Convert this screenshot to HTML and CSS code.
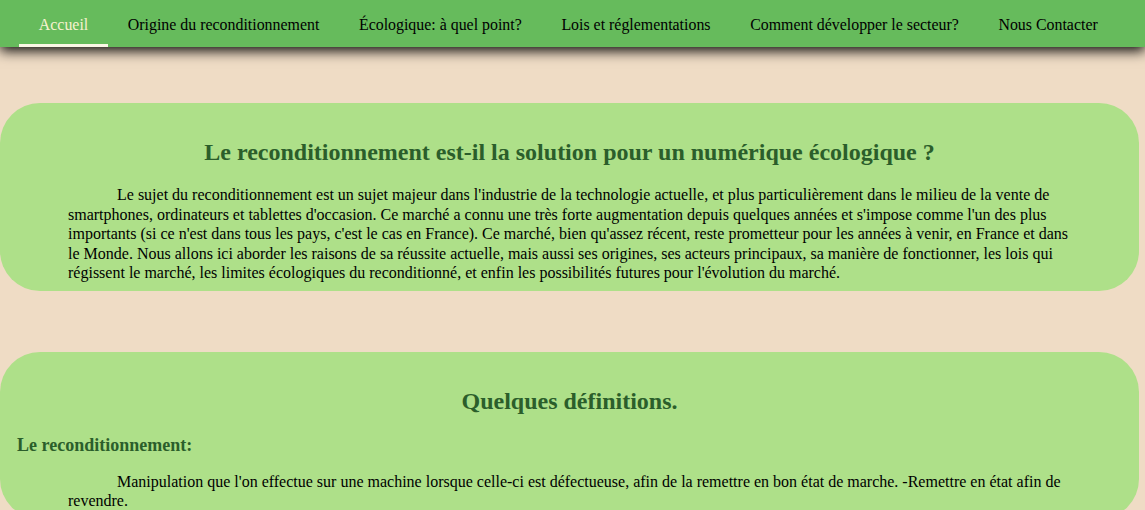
FILE: index.html
```html
<!DOCTYPE html>
<html lang="fr">
<head>
<meta charset="utf-8">
<title>Reconditionnement</title>
<link rel="stylesheet" href="styles.css">
</head>
<body>
<nav class="topnav">
  <a class="nav-item active" href="#">Accueil</a>
  <a class="nav-item" href="#">Origine du reconditionnement</a>
  <a class="nav-item" href="#">Écologique: à quel point?</a>
  <a class="nav-item" href="#">Lois et réglementations</a>
  <a class="nav-item" href="#">Comment développer le secteur?</a>
  <a class="nav-item" href="#">Nous Contacter</a>
</nav>
<main class="content">
  <section class="card">
    <h2 class="card-title">Le reconditionnement est-il la solution pour un numérique écologique ?</h2>
    <p class="card-text">Le sujet du reconditionnement est un sujet majeur dans l'industrie de la technologie actuelle, et plus particulièrement dans le milieu de la vente de smartphones, ordinateurs et tablettes d'occasion. Ce marché a connu une très forte augmentation depuis quelques années et s'impose comme l'un des plus importants (si ce n'est dans tous les pays, c'est le cas en France). Ce marché, bien qu'assez récent, reste prometteur pour les années à venir, en France et dans le Monde. Nous allons ici aborder les raisons de sa réussite actuelle, mais aussi ses origines, ses acteurs principaux, sa manière de fonctionner, les lois qui régissent le marché, les limites écologiques du reconditionné, et enfin les possibilités futures pour l'évolution du marché.</p>
  </section>
  <section class="card">
    <h2 class="card-title">Quelques définitions.</h2>
    <h3 class="card-sub">Le reconditionnement:</h3>
    <p class="card-text">Manipulation que l'on effectue sur une machine lorsque celle-ci est défectueuse, afin de la remettre en bon état de marche. -Remettre en état afin de revendre.</p>
  </section>
</main>
</body>
</html>
```
FILE: styles.css
```css
html, body {
  margin: 0;
  padding: 0;
}
body {
  background: #efdcc5;
  font-family: "Liberation Serif", "Times New Roman", serif;
  font-size: 16px;
  color: #000;
  overflow: hidden;
}
.topnav {
  display: flex;
  align-items: stretch;
  height: 47px;
  padding-left: 19px;
  background: #66bb5c;
  box-shadow: 0 4px 12px rgba(0, 0, 0, 0.95);
  position: relative;
  z-index: 1;
}
.nav-item {
  display: flex;
  align-items: center;
  padding: 5px 19.8px 0;
  color: #000;
  text-decoration: none;
  font-size: 15.9px;
  border-bottom: 3px solid transparent;
}
.nav-item.active {
  color: #f6f2cf;
  border-bottom-color: #fbf7e6;
}
.content {
  padding-top: 56px;
  display: flex;
  flex-direction: column;
  gap: 61px;
}
.card {
  background: #aee089;
  border-radius: 40px;
  margin-right: 6px;
  padding: 16px 0 8px;
}
.card-title {
  text-align: center;
  color: #2b5e2b;
  font-size: 24px;
  margin: 20px 0 19px;
}
.card-sub {
  color: #2b5e2b;
  font-size: 18px;
  margin: 0 0 16px 17px;
}
.card + .card .card-title {
  margin-bottom: 20px;
}
.card-text {
  margin: 0;
  padding: 0 68px;
  text-indent: 49px;
  line-height: 19.5px;
}
```
